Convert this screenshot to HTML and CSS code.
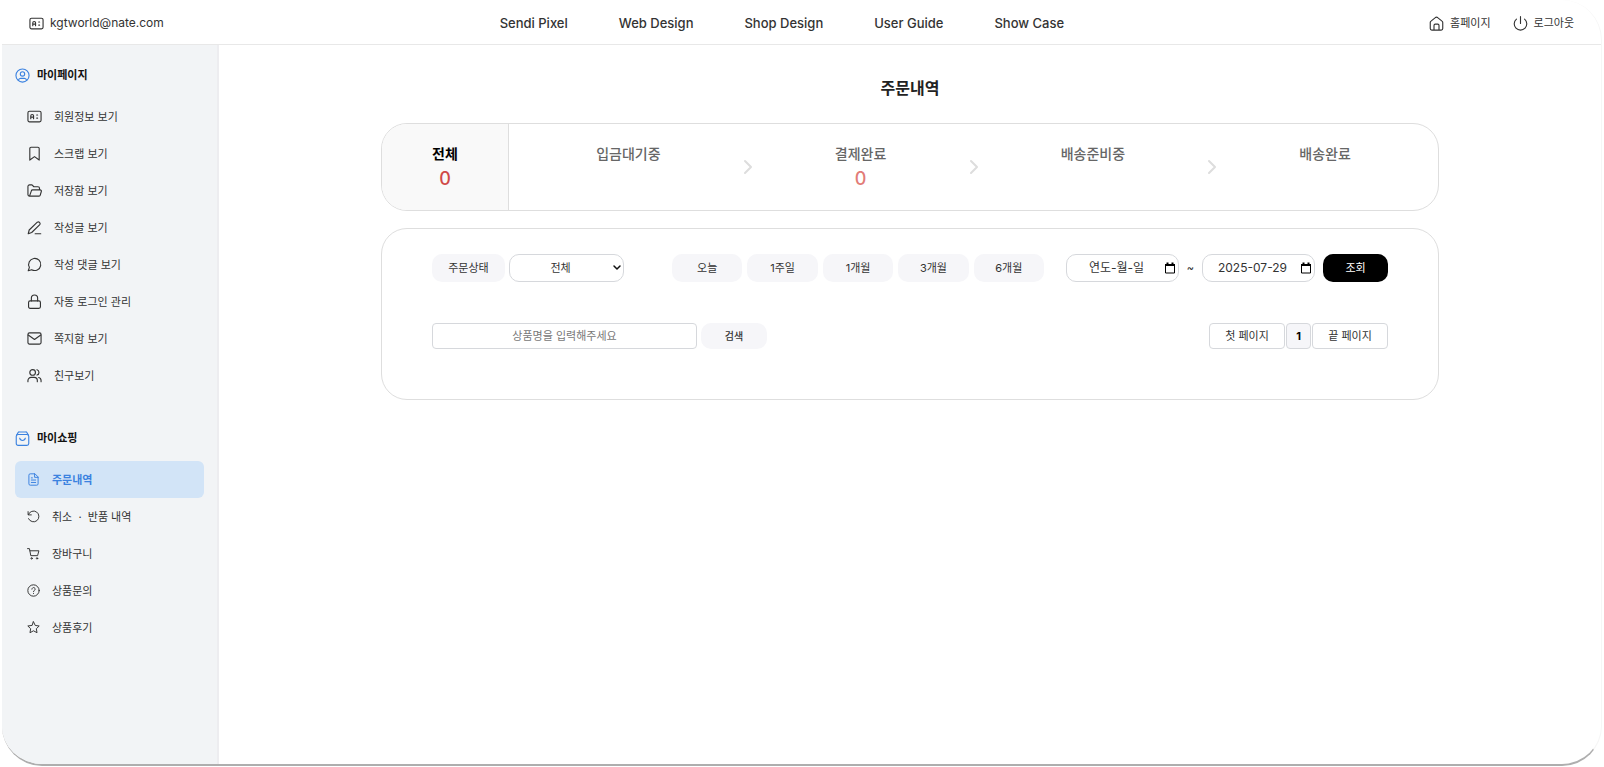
FILE: index.html
```html
<!DOCTYPE html>
<html lang="ko">
<head>
<meta charset="utf-8">
<meta name="viewport" content="width=device-width, initial-scale=1">
<title>주문내역</title>
<link rel="stylesheet" href="styles.css">
</head>
<body>
<svg class="sprite" aria-hidden="true">
  <symbol id="i-card" viewBox="0 0 24 24"><rect x="1.5" y="3.5" width="21" height="17" rx="2.500"/><path d="M6 15.5v-4.500a2 2 0 0 1 4.500 0v4.500M6 13h4.500M15.500 9.500h1.500M15.500 14.500h1.500"/></symbol>
  <symbol id="i-user" viewBox="0 0 24 24"><circle cx="12" cy="12" r="10.500"/><circle cx="12" cy="9.500" r="3.500"/><path d="M5.500 19.500a4 4 0 0 1 3.500-3h6a4 4 0 0 1 3.500 3"/></symbol>
  <symbol id="i-bookmark" viewBox="0 0 24 24"><path d="M19.500 22.500l-7.500-5.500-7.500 5.500V4a2 2 0 0 1 2-2h11a2 2 0 0 1 2 2z"/></symbol>
  <symbol id="i-folder" viewBox="0 0 24 24"><path d="M4 21l3-8.500a2 2 0 0 1 2-1.500h12a2 2 0 0 1 1.900 2.600l-1.700 5.900A2 2 0 0 1 19.200 21H4a2.500 2.500 0 0 1-2.500-2.500v-13A2.500 2.500 0 0 1 4 3h4l3 3h6.500A2.500 2.500 0 0 1 20 8.500V11"/></symbol>
  <symbol id="i-pen" viewBox="0 0 24 24"><path d="M13 22h9M16.500 3.500a2.900 2.900 0 0 1 4 4L7.500 20 2 22l1.500-6z"/></symbol>
  <symbol id="i-chat" viewBox="0 0 24 24"><path d="M2 22l1.800-5.500A9.700 9.700 0 1 1 7.500 20.300z"/></symbol>
  <symbol id="i-lock" viewBox="0 0 24 24"><rect x="2.500" y="11" width="19" height="12" rx="2.500"/><path d="M7 11V6.500a5 5 0 0 1 10 0V11"/></symbol>
  <symbol id="i-mail" viewBox="0 0 24 24"><rect x="1.500" y="3" width="21" height="18" rx="2.500"/><path d="M2 6.500l10 7 10-7"/></symbol>
  <symbol id="i-users" viewBox="0 0 24 24"><circle cx="9" cy="7" r="4.500"/><path d="M1.500 22v-2a5 5 0 0 1 5-5h5a5 5 0 0 1 5 5v2M16 2.700a4.500 4.500 0 0 1 0 8.600M22.500 22v-2a5 5 0 0 0-3.800-4.800"/></symbol>
  <symbol id="i-bag" viewBox="0 0 24 24"><rect x="2" y="5.500" width="20" height="17.500" rx="3"/><path d="M2.500 7l2.500-4.500a2 2 0 0 1 2-1h10a2 2 0 0 1 2 1L21.500 7M7.500 11.500a4.600 4.600 0 0 0 9 0"/></symbol>
  <symbol id="i-doc" viewBox="0 0 24 24"><path d="M14 1.500H6A2.500 2.500 0 0 0 3.500 4v16A2.500 2.500 0 0 0 6 22.500h12a2.500 2.500 0 0 0 2.500-2.500V8zM14 1.500V8h6.500M8 9h2M8 13h8M8 17.500h8"/></symbol>
  <symbol id="i-undo" viewBox="0 0 24 24"><path d="M2 3v6h6M2.500 8.500A10 10 0 1 1 2.800 16"/></symbol>
  <symbol id="i-cart" viewBox="0 0 24 24"><path d="M1 3h3.500L7 16h12.500L22 7H5.500"/><circle cx="8.500" cy="21" r="1.300"/><circle cx="18.500" cy="21" r="1.300"/></symbol>
  <symbol id="i-help" viewBox="0 0 24 24"><circle cx="12" cy="12" r="10.500"/><path d="M9 9.500a3 3 0 1 1 4.500 2.600c-1 .6-1.500 1-1.500 2.100M12 17.500v.2"/></symbol>
  <symbol id="i-star" viewBox="0 0 24 24"><path d="M12 1.500l3.200 6.700 7.300 1-5.300 5.100 1.300 7.300-6.500-3.500-6.500 3.500 1.300-7.300L1.500 9.200l7.300-1z"/></symbol>
  <symbol id="i-home" viewBox="0 0 24 24"><path d="M2 10.500a3 3 0 0 1 1.200-2.300l7-5.700a3 3 0 0 1 3.600 0l7 5.700a3 3 0 0 1 1.200 2.300V20a2.500 2.500 0 0 1-2.500 2.500h-15A2.500 2.500 0 0 1 2 20zM8 22v-7a2 2 0 0 1 2-2h4a2 2 0 0 1 2 2v7"/></symbol>
  <symbol id="i-power" viewBox="0 0 24 24"><path d="M12 1v11M18.500 5a10 10 0 1 1-13 0"/></symbol>
  <symbol id="i-chevron" viewBox="0 0 10 16"><path d="M2 2l6 6-6 6"/></symbol>
  <symbol id="i-calendar" viewBox="0 0 12 12"><path d="M1.500 2.500h9v8.500h-9z"/><path d="M1 3h10M3.500 .5v2M8.500 .5v2" stroke-width="2"/></symbol>
  <symbol id="i-down" viewBox="0 0 10 8"><path d="M2 2l3 3 3-3"/></symbol>
</svg>
<div class="frame">
  <header class="top">
    <div class="account"><svg class="icon"><use href="#i-card"/></svg>kgtworld@nate.com</div>
    <nav class="menu">
      <a href="#">Sendi Pixel</a><a href="#">Web Design</a><a href="#">Shop Design</a><a href="#">User Guide</a><a href="#">Show Case</a>
    </nav>
    <div class="links">
      <a href="#"><svg class="icon"><use href="#i-home"/></svg>홈페이지</a>
      <a href="#"><svg class="icon"><use href="#i-power"/></svg>로그아웃</a>
    </div>
  </header>
  <div class="body">
    <aside class="side">
      <section>
        <h2><svg class="icon"><use href="#i-user"/></svg>마이페이지</h2>
        <ul class="my">
          <li><a href="#"><svg class="icon"><use href="#i-card"/></svg>회원정보 보기</a></li>
          <li><a href="#"><svg class="icon"><use href="#i-bookmark"/></svg>스크랩 보기</a></li>
          <li><a href="#"><svg class="icon"><use href="#i-folder"/></svg>저장함 보기</a></li>
          <li><a href="#"><svg class="icon"><use href="#i-pen"/></svg>작성글 보기</a></li>
          <li><a href="#"><svg class="icon"><use href="#i-chat"/></svg>작성 댓글 보기</a></li>
          <li><a href="#"><svg class="icon"><use href="#i-lock"/></svg>자동 로그인 관리</a></li>
          <li><a href="#"><svg class="icon"><use href="#i-mail"/></svg>쪽지함 보기</a></li>
          <li><a href="#"><svg class="icon"><use href="#i-users"/></svg>친구보기</a></li>
        </ul>
      </section>
      <section>
        <h2><svg class="icon"><use href="#i-bag"/></svg>마이쇼핑</h2>
        <ul class="shop">
          <li><a class="current" href="#" aria-current="page"><svg class="icon"><use href="#i-doc"/></svg>주문내역</a></li>
          <li><a href="#"><svg class="icon"><use href="#i-undo"/></svg>취소&nbsp; ·&nbsp; 반품 내역</a></li>
          <li><a href="#"><svg class="icon"><use href="#i-cart"/></svg>장바구니</a></li>
          <li><a href="#"><svg class="icon"><use href="#i-help"/></svg>상품문의</a></li>
          <li><a href="#"><svg class="icon"><use href="#i-star"/></svg>상품후기</a></li>
        </ul>
      </section>
    </aside>
    <main class="main">
      <h1>주문내역</h1>
      <div class="status">
        <a class="all" href="#">전체<strong>0</strong></a>
        <a class="step" href="#">입금대기중</a>
        <svg class="chevron"><use href="#i-chevron"/></svg>
        <a class="step" href="#">결제완료<strong>0</strong></a>
        <svg class="chevron"><use href="#i-chevron"/></svg>
        <a class="step" href="#">배송준비중</a>
        <svg class="chevron"><use href="#i-chevron"/></svg>
        <a class="step" href="#">배송완료</a>
      </div>
      <form class="panel">
        <div class="row filters">
          <div class="state">
            <label class="chip" for="state">주문상태</label>
            <div class="select">
              <select id="state"><option>전체</option></select>
              <svg class="down"><use href="#i-down"/></svg>
            </div>
          </div>
          <div class="periods">
            <button class="chip" type="button">오늘</button>
            <button class="chip" type="button">1주일</button>
            <button class="chip" type="button">1개월</button>
            <button class="chip" type="button">3개월</button>
            <button class="chip" type="button">6개월</button>
          </div>
          <div class="range">
            <div class="date"><input type="text" aria-label="시작일" value="연도-월-일"><button type="button" aria-label="시작일 선택"><svg><use href="#i-calendar"/></svg></button></div>
            <span class="tilde">~</span>
            <div class="date"><input type="text" aria-label="종료일" value="2025-07-29"><button type="button" aria-label="종료일 선택"><svg><use href="#i-calendar"/></svg></button></div>
            <button class="submit" type="button">조회</button>
          </div>
        </div>
        <div class="row finder">
          <input class="keyword" type="text" aria-label="상품명" placeholder="상품명을 입력해주세요">
          <button class="chip search" type="button">검색</button>
          <div class="pager">
            <button type="button">첫 페이지</button>
            <button class="on" type="button" aria-current="page">1</button>
            <button type="button">끝 페이지</button>
          </div>
        </div>
      </form>
    </main>
  </div>
</div>
</body>
</html>
```
FILE: styles.css
```css
* { box-sizing: border-box; }

body {
  margin: 0;
  background: #fff;
  color: #333;
  font: 400 11px/16px Inter, "Noto Sans CJK KR", sans-serif;
}

a { color: inherit; text-decoration: none; }
h1, h2, ul { margin: 0; padding: 0; }
ul { list-style: none; }
button, input, select { margin: 0; padding: 0; border: 0; font: inherit; color: inherit; }
button { cursor: pointer; }
svg { fill: none; stroke: currentColor; stroke-width: 1.8; stroke-linecap: round; stroke-linejoin: round; flex: none; }
.sprite { display: none; }
.icon { width: 15px; height: 15px; }

.frame {
  display: flex;
  flex-direction: column;
  min-height: calc(100vh - 1px);
  margin: 0 2px;
  border: solid #f6f6f6;
  border-width: 0 1px 2px 0;
  border-bottom-color: #aeaeae;
  border-radius: 40px;
  overflow: hidden;
}

.top {
  display: grid;
  grid-template-columns: 12fr auto 13fr;
  align-items: center;
  height: 45px;
  padding: 2px 27px 0;
  border-bottom: 1px solid #e8e8e8;
}
.account, .links, .links a { display: flex; align-items: center; }
.account { gap: 6px; font-size: 12px; }
.menu { display: flex; gap: 51px; font-size: 13px; font-weight: 500; }
.links { justify-content: flex-end; gap: 22px; }
.links a { gap: 6px; }

.body { display: flex; flex: 1; }
.side {
  width: 217px;
  padding: 20px 13px;
  background: #f2f4f6;
  border-right: 2px solid #ededf0;
}
.side section + section { margin-top: 34px; }
.side h2 {
  display: flex;
  align-items: center;
  gap: 7px;
  height: 20px;
  margin-bottom: 13px;
  color: #111;
  font-size: 11px;
  font-weight: 700;
}
.side h2 .icon { color: #3b82e0; }
.side li a { display: flex; align-items: center; height: 37px; padding-left: 12px; border-radius: 6px; }
.my a { gap: 12px; }
.shop a { gap: 12px; }
.shop .icon { width: 13px; height: 13px; }
.side .current { background: #d2e4f7; color: #3b82e0; font-weight: 700; }

.main { flex: 1; padding: 31px 162px; }
h1 { color: #222; font-size: 16px; line-height: 24px; text-align: center; }
.status, .panel { border: 1px solid #dedede; border-radius: 26px; }
.status {
  display: flex;
  align-items: center;
  height: 88px;
  margin-top: 23px;
  overflow: hidden;
  color: #666;
  font-size: 14px;
  font-weight: 500;
  line-height: 24px;
  text-align: center;
}
.status a { display: flex; flex-direction: column; height: 100%; padding-top: 18px; }
.status strong { color: #e27c78; font-size: 18px; font-weight: 500; line-height: 26px; }
.status .all { width: 127px; background: #f9f9f9; border-right: 1px solid #dedede; color: #000; font-weight: 700; }
.status .all strong { color: #d04a48; }
.step { flex: 1 1 auto; }
.chevron { width: 10px; height: 16px; margin: 0 -5px; color: #ddd; stroke-width: 2; }

.panel { margin-top: 17px; padding: 25px 50px 50px; }
.row { display: flex; align-items: center; }
.chip { height: 28px; border-radius: 10px; background: #f6f6f9; line-height: 28px; text-align: center; }
.state { display: flex; gap: 4px; }
.state .chip { width: 73px; }
.select { position: relative; width: 115px; }
.select select {
  appearance: none;
  width: 100%;
  height: 28px;
  padding-right: 12px;
  border: 1px solid #d6d8dc;
  border-radius: 10px;
  background: #fff;
  text-align: center;
  text-align-last: center;
}
.down { position: absolute; right: 2px; top: 10px; width: 10px; height: 8px; color: #111; stroke-width: 1.5; pointer-events: none; }
.periods { display: flex; flex: 1; gap: 5px; margin: 0 22px 0 48px; }
.periods .chip { flex: 1; }
.range { display: flex; align-items: center; }
.date {
  display: flex;
  align-items: center;
  width: 113px;
  height: 28px;
  padding: 0 2px 0 2px;
  border: 1px solid #d6d8dc;
  border-radius: 10px;
}
.date input { flex: 1; min-width: 0; background: none; font-size: 12px; text-align: center; outline: 0; }
.date button { display: flex; background: none; color: #000; }
.date svg { width: 12px; height: 12px; stroke-width: 1; stroke-linecap: butt; stroke-linejoin: miter; }
.tilde { width: 23px; text-align: center; }
.submit { width: 65px; height: 28px; margin-left: 8px; border-radius: 10px; background: #000; color: #fff; }

.finder { margin-top: 41px; }
.keyword { width: 265px; height: 26px; border: 1px solid #d6d8dc; border-radius: 4px; text-align: center; }
.keyword::placeholder { color: #777; opacity: 1; }
.search { width: 66px; height: 26px; margin-left: 4px; font-size: 10px; font-weight: 500; line-height: 26px; }
.pager { display: flex; gap: 1px; margin-left: auto; }
.pager button { width: 76px; height: 26px; border: 1px solid #d6d8dc; border-radius: 4px; background: #fff; }
.pager .on { width: 25px; background: #f6f6f9; color: #000; font-weight: 700; }
```
